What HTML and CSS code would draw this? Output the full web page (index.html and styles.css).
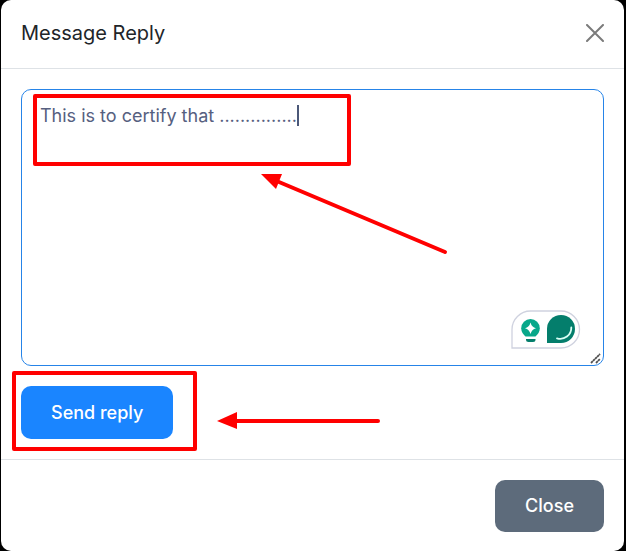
FILE: index.html
```html
<!DOCTYPE html>
<html lang="en">
<head>
<meta charset="utf-8">
<meta name="viewport" content="width=device-width, initial-scale=1">
<title>Message Reply</title>
<link rel="stylesheet" href="styles.css">
</head>
<body>
<form class="modal" role="dialog" aria-labelledby="modal-title">
  <header class="modal-header">
    <h1 class="modal-title" id="modal-title">Message Reply</h1>
    <button class="dismiss" type="button" aria-label="Dismiss">
      <svg width="18" height="18" viewBox="0 0 18 18" fill="none" stroke="#7b7b7b" stroke-width="2" stroke-linecap="round" aria-hidden="true"><path d="M1 1l16 16M17 1L1 17"/></svg>
    </button>
  </header>
  <div class="modal-body">
    <div class="field">
      <textarea class="message" aria-label="Reply message" spellcheck="false">This is to certify that ...............</textarea>
      <span class="caret"></span>
      <svg class="assistant" width="70" height="39" viewBox="0 0 70 39" aria-hidden="true">
        <path d="M1 38V19.500A18.500 18.500 0 0 1 19.500 1H50a18.500 18.500 0 0 1 0 37Z" fill="#fff" stroke="#cfd2df" stroke-width="1.300"/>
        <path d="M19.500 9a9.300 9.300 0 0 0-9.300 9.300c0 3.600 2 6.200 4.300 8.200h10c2.300-2 4.300-4.600 4.300-8.200A9.300 9.300 0 0 0 19.500 9Z" fill="#08a88a"/>
        <path d="M19.500 12.500q1.200 4.800 5.500 5.800-4.300 1-5.500 5.800-1.200-4.800-5.500-5.800 4.300-1 5.500-5.800Z" fill="#fff"/>
        <path d="M15 29h9.500v.5q0 2.500-2.500 2.500h-4.500Q15 32 15 29.500Z" fill="#047e6c"/>
        <path d="M36 33V19a14 14 0 1 1 14 14Z" fill="#047e6c"/>
        <path d="M60.300 17.500A11 11 0 0 1 46 28.300" fill="none" stroke="#d9fff5" stroke-width="1.800" stroke-linecap="round"/>
      </svg>
      <svg class="grip" width="12" height="12" viewBox="0 0 12 12" fill="none" aria-hidden="true"><path d="M1 10L10 1M6 10l4-4" stroke="#505050" stroke-width="1.800" stroke-dasharray="2.500 .4"/></svg>
      <span class="highlight highlight-message"></span>
      <svg class="arrow arrow-message" width="188" height="82" viewBox="0 0 188 82" aria-hidden="true"><path d="M18 9l166 70" stroke="#f00" stroke-width="4" stroke-linecap="round"/><path d="M0 1h21l-6 15Z" fill="#f00"/></svg>
    </div>
    <div class="actions">
      <button class="button primary" type="submit">Send reply</button>
      <span class="highlight highlight-send"></span>
      <svg class="arrow arrow-send" width="164" height="18" viewBox="0 0 164 18" aria-hidden="true"><path d="M18 9h143" stroke="#f00" stroke-width="4" stroke-linecap="round"/><path d="M0 9l20-9v17Z" fill="#f00"/></svg>
    </div>
  </div>
  <footer class="modal-footer">
    <button class="button secondary" type="button">Close</button>
  </footer>
</form>
</body>
</html>
```

FILE: styles.css
```css
* {
  box-sizing: border-box;
}

body {
  margin: 0;
  padding: 0 2px 0 1px;
  background: #000;
  font-family: Inter, "Liberation Sans", sans-serif;
  color: #212529;
}

.modal {
  background: #fff;
  border-radius: 10px;
  overflow: hidden;
}

.modal-header {
  display: flex;
  align-items: center;
  justify-content: space-between;
  padding: 19px 20px 21px;
  border-bottom: 1px solid #dee2e6;
}

.modal-title {
  margin: 0;
  font-size: 20px;
  font-weight: 400;
  line-height: 28px;
}

.dismiss {
  display: flex;
  padding: 0;
  border: 0;
  background: none;
}

.modal-body {
  display: flex;
  flex-direction: column;
  gap: 20px;
  padding: 20px;
}

.field,
.actions {
  position: relative;
  display: flex;
}

.actions {
  min-height: 53px;
}

.message {
  flex: 1;
  min-width: 0;
  height: 277px;
  padding: 12px 18px;
  border: 1px solid #2684e8;
  border-radius: 10px;
  outline: 0;
  resize: none;
  background: #fff;
  color: #566080;
  font-family: inherit;
  font-size: 18px;
  line-height: 28px;
}

.caret {
  position: absolute;
  top: 16px;
  left: 276px;
  width: 2px;
  height: 21px;
  background: #4b5878;
}

.assistant {
  position: absolute;
  right: 23px;
  bottom: 17px;
}

.grip {
  position: absolute;
  right: 2px;
  bottom: 1px;
}

.highlight {
  position: absolute;
  border: 4px solid #f00;
  border-radius: 2px;
  pointer-events: none;
}

.highlight-message {
  top: 5px;
  left: 12px;
  width: 318px;
  height: 72px;
}

.highlight-send {
  top: -15px;
  left: -9px;
  width: 185px;
  height: 80px;
}

.arrow {
  position: absolute;
  pointer-events: none;
}

.arrow-message {
  top: 84px;
  left: 240px;
}

.arrow-send {
  top: 26px;
  left: 196px;
}

.button {
  padding: 12px 30px;
  border: 0;
  border-radius: 10px;
  color: #fff;
  font-family: inherit;
  font-size: 18px;
  font-weight: 500;
  line-height: 28px;
}

.primary {
  background: #1a85ff;
}

.secondary {
  background: #5d6b7b;
}

.modal-footer {
  display: flex;
  justify-content: flex-end;
  padding: 20px 20px 19px;
  border-top: 1px solid #dee2e6;
}
```
